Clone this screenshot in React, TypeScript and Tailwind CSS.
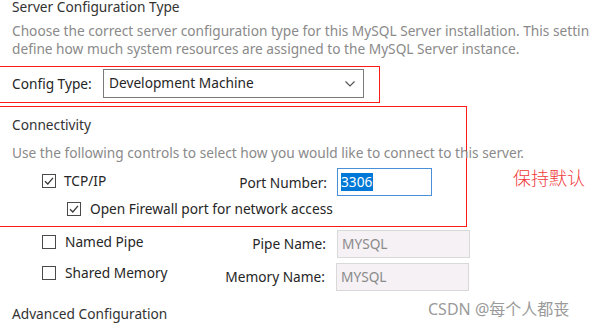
import React from "react";

function Check({ checked }: { checked: boolean }) {
  return (
    <svg width="14" height="14" viewBox="0 0 14 14" className="shrink-0">
      <rect x="0.5" y="0.5" width="13" height="13" fill="#fff" stroke="#4a4a4a" />
      {checked && <path d="M3 7.2 L5.8 10 L11 3.8" fill="none" stroke="#3a3a3a" strokeWidth="1.3" />}
    </svg>
  );
}

export default function App() {
  return (
    <div
      className="relative w-[589px] h-[329px] overflow-hidden bg-white text-[13.7px] text-[#262626]"
      style={{ fontFamily: '"Segoe UI", "Noto Sans", "Open Sans", sans-serif' }}
    >
      <div className="pl-[12px] mt-[-2px] leading-[18px] text-[#333]">Server Configuration Type</div>
      <div className="pl-[12px] mt-[6px] leading-[18px] text-[#8a8a8a] whitespace-nowrap">
        <div>Choose the correct server configuration type for this MySQL Server installation. This setting will</div>
        <div>define how much system resources are assigned to the MySQL Server instance.</div>
      </div>

      {/* red box 1 */}
      <div className="mt-[8px] w-[380px] h-[37px] border border-l-0 border-[#ff1a1a] flex items-center">
        <div className="pl-[12px] w-[103px]">Config Type:</div>
        <div className="w-[261px] h-[29px] border border-[#7a7a7a] flex items-center justify-between pl-[5px] pr-[8px] mt-[-2px]">
          <span>Development Machine</span>
          <svg width="10" height="6" viewBox="0 0 10 6">
            <path d="M0.5 0.5 L5 5 L9.5 0.5" fill="none" stroke="#555" strokeWidth="1.2" />
          </svg>
        </div>
      </div>

      {/* red box 2 */}
      <div className="mt-[3px] w-[467px] h-[121px] border border-l-0 border-[#ff1a1a]">
        <div className="pl-[12px] mt-[9px] leading-[18px] text-[#333]">Connectivity</div>
        <div className="pl-[12px] mt-[10px] leading-[18px] text-[#8a8a8a] whitespace-nowrap">
          Use the following controls to select how you would like to connect to this server.
        </div>
        <div className="flex items-center mt-[6px] h-[28px]">
          <div className="flex items-center gap-[8px] pl-[42px] w-[337px] mt-[-2px]">
            <Check checked />
            <span className="flex-1">TCP/IP</span>
            <span className="pr-[10px] mt-[4px]">Port Number:</span>
          </div>
          <div className="w-[95px] h-[28px] border border-[#4a90d9] flex items-center pl-[3px]">
            <span className="bg-[#0078d7] text-white leading-[18px] pr-[1px]">3306</span>
          </div>
        </div>
        <div className="flex items-center gap-[9px] pl-[67px] mt-[5px] h-[16px]">
          <Check checked />
          <span>Open Firewall port for network access</span>
        </div>
      </div>

      <div className="flex items-center mt-[3px] h-[28px]">
        <div className="flex items-center gap-[9px] pl-[42px] w-[182px] mt-[-3px]">
          <Check checked={false} />
          <span>Named Pipe</span>
        </div>
        <div className="w-[155px] text-right pr-[11px]">Pipe Name:</div>
        <div className="w-[133px] h-[28px] border border-[#d9d9d9] bg-[#f5f1f5] text-[#8a8a8a] flex items-center pl-[4px]">MYSQL</div>
      </div>
      <div className="flex items-center mt-[5px] h-[28px]">
        <div className="flex items-center gap-[9px] pl-[42px] w-[182px] mt-[-8px]">
          <Check checked={false} />
          <span>Shared Memory</span>
        </div>
        <div className="w-[154px] text-right pr-[11px]">Memory Name:</div>
        <div className="w-[133px] h-[28px] border border-[#d9d9d9] bg-[#f5f1f5] text-[#8a8a8a] flex items-center pl-[4px]">MYSQL</div>
      </div>
      <div className="pl-[12px] mt-[14px] leading-[18px] text-[#333]">Advanced Configuration</div>

      <div
        className="absolute left-[513px] top-[166px] text-[18px] leading-[22px] text-[#f03a3a] font-light"
        style={{ fontFamily: '"Noto Sans CJK SC", serif' }}
      >
        保持默认
      </div>
      <div
        className="absolute left-[428px] top-[299px] text-[16px] leading-[20px] text-[#9a9a9a]"
        style={{ fontFamily: '"Noto Sans", "Noto Sans CJK SC", sans-serif' }}
      >
        CSDN @每个人都丧
      </div>
    </div>
  );
}
